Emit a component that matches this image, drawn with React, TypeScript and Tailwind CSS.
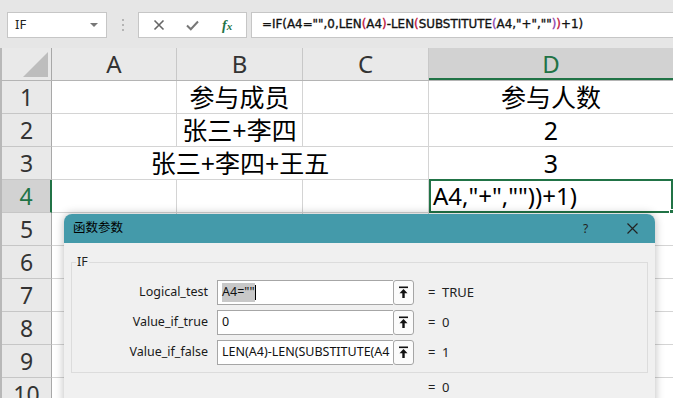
import React from 'react';

const FONT = { fontFamily: '"Noto Sans", "Noto Sans CJK SC", sans-serif' };

const COLS = [
  { name: 'A', w: 'w-[125px]' },
  { name: 'B', w: 'w-[126px]' },
  { name: 'C', w: 'w-[126px]' },
];

const UpArrow: React.FC = () => (
  <svg width="11" height="13" viewBox="0 0 11 13">
    <rect x="1" y="0.5" width="9" height="1.6" fill="#111" />
    <path d="M5.5 3 L1.5 7.2 H4.3 V12 H6.7 V7.2 H9.5 Z" fill="#111" />
  </svg>
);

const Field: React.FC<{ label: string; value: React.ReactNode; result: string }> = ({ label, value, result }) => (
  <div className="flex items-center h-[25px]">
    <div className="w-[144px] text-right text-[12.5px] text-[#1a1a1a] pr-[8px]">{label}</div>
    <div className="flex h-[25px] w-[197px] ml-[1px]">
      <div className="flex-1 bg-white border border-[#a6a6a6] border-r-0 flex items-center pl-[4px] text-[12.5px] text-[#111] overflow-hidden whitespace-nowrap">
        {value}
      </div>
      <div className="w-[21px] h-[25px] bg-[#fbfbfb] border border-[#a6a6a6] rounded-[3px] flex items-start justify-center pt-[5px]">
        <UpArrow />
      </div>
    </div>
    <div className="ml-[14px] text-[13px] text-[#222] w-[14px]">=</div>
    <div className="text-[13px] text-[#222]">{result}</div>
  </div>
);

const App: React.FC = () => {
  const rows = [1, 2, 3, 4, 5, 6, 7, 8, 9, 10];
  const cellText: Record<number, { b?: string; d?: string }> = {
    1: { b: '参与成员', d: '参与人数' },
    2: { b: '张三+李四', d: '2' },
    3: { b: '张三+李四+王五', d: '3' },
  };

  return (
    <div className="w-[673px] h-[398px] relative overflow-hidden bg-white" style={FONT}>
      {/* toolbar */}
      <div className="h-[48px] bg-[#e6e6e6] flex items-start pt-[12px]">
        <div className="ml-[7px] w-[100px] h-[26px] bg-white border border-[#c6c6c6] flex items-center pl-[7px] pr-[8px] text-[13px] text-[#222]">
          <span className="flex-1">IF</span>
          <svg width="8" height="5" viewBox="0 0 8 5"><path d="M0 0 H8 L4 4 Z" fill="#777" /></svg>
        </div>
        <div className="w-[31px] h-[26px] flex flex-col items-center justify-center gap-[3px]">
          <div className="w-[2px] h-[2px] bg-[#b4b4b4]" />
          <div className="w-[2px] h-[2px] bg-[#b4b4b4]" />
          <div className="w-[2px] h-[2px] bg-[#b4b4b4]" />
        </div>
        <div className="w-[109px] h-[26px] bg-white border border-[#c6c6c6] flex items-center">
          <svg className="ml-[14px]" width="12" height="12" viewBox="0 0 12 12">
            <path d="M1.5 1.5 L10.5 10.5 M10.5 1.5 L1.5 10.5" stroke="#666" strokeWidth="1.6" />
          </svg>
          <svg className="ml-[21px]" width="13" height="11" viewBox="0 0 13 11">
            <path d="M1 5.5 L4.8 9.3 L12 1.5" stroke="#777" strokeWidth="2" fill="none" />
          </svg>
          <span className="ml-[23px] text-[14px] italic text-[#217346] font-semibold" style={{ fontFamily: '"Liberation Serif", serif' }}>
            f<span className="text-[11px]">x</span>
          </span>
        </div>
        <div
          className="ml-[4px] flex-1 h-[26px] bg-white border border-[#c6c6c6] border-r-0 flex items-center pl-[10px] text-[11.9px] text-[#111] whitespace-nowrap [-webkit-text-stroke:0.35px_#111]"
          style={{ fontFamily: '"DejaVu Sans", sans-serif' }}
        >
          =IF(A4="",0,LEN<span className="text-[#c0143c] [-webkit-text-stroke:0.35px_#c0143c]">(</span>A4
          <span className="text-[#c0143c] [-webkit-text-stroke:0.35px_#c0143c]">)</span>-LEN
          <span className="text-[#c0143c] [-webkit-text-stroke:0.35px_#c0143c]">(</span>SUBSTITUTE
          <span className="text-[#8e44ad] [-webkit-text-stroke:0.35px_#8e44ad]">(</span>A4,"+",""
          <span className="text-[#8e44ad] [-webkit-text-stroke:0.35px_#8e44ad]">)</span>
          <span className="text-[#c0143c] [-webkit-text-stroke:0.35px_#c0143c]">)</span>+1)
        </div>
      </div>

      {/* column header */}
      <div className="flex h-[33px] border-b border-[#b4b4b4] bg-[#e9e9e9] border-l-2 border-l-[#b8b8b8]">
        <div className="w-[50px] border-r border-[#a8a8a8] flex items-end justify-end pr-[3px] pb-[3px]">
          <svg width="25" height="25" viewBox="0 0 25 25"><path d="M25 0 V25 H0 Z" fill="#bdbdbd" /></svg>
        </div>
        {COLS.map(c => (
          <div key={c.name} className={`${c.w} border-r border-[#c8c8c8] flex items-center justify-center text-[24px] text-[#333] leading-none`}>
            {c.name}
          </div>
        ))}
        <div className="flex-1 bg-[#d2d2d2] border-b-2 border-[#217346] flex items-center justify-center text-[24px] text-[#217346] leading-none pt-[2px]">
          D
        </div>
      </div>

      {/* rows */}
      {rows.map(r => {
        const sel = r === 4;
        const t = cellText[r] || {};
        return (
          <div key={r} className="flex h-[33px] border-l-2 border-l-[#b8b8b8]">
            <div
              className={`w-[50px] border-b border-[#c6c6c6] flex items-center justify-center text-[23px] leading-none ${
                sel ? 'bg-[#d2d2d2] text-[#217346] border-r-2 border-r-[#217346]' : 'bg-[#e9e9e9] text-[#333] border-r border-r-[#a8a8a8]'
              }`}
            >
              {r}
            </div>
            <div className={`w-[125px] border-b border-[#d4d4d4] ${r === 3 ? '' : 'border-r'} border-r-[#d4d4d4]`} />
            <div className={`w-[126px] border-b border-[#d4d4d4] ${r === 3 ? '' : 'border-r'} border-r-[#d4d4d4] flex items-center justify-center`}>
              {t.b && <span className="whitespace-nowrap text-[25px] text-black leading-none">{t.b}</span>}
            </div>
            <div className="w-[126px] border-b border-r border-[#d4d4d4]" />
            {sel ? (
              <div className="flex-1 border-2 border-[#217346] -mt-[1px] h-[34px] flex items-center pl-[2px] text-[24px] text-black leading-none whitespace-nowrap relative">
                A4,"+",""))+1)
                <div className="absolute -right-[3px] -bottom-[3px] w-[5px] h-[5px] bg-[#217346] border border-white" />
              </div>
            ) : (
              <div className="flex-1 border-b border-[#d4d4d4] flex items-center justify-center">
                {t.d && <span className="text-[25px] text-black leading-none">{t.d}</span>}
              </div>
            )}
          </div>
        );
      })}

      {/* dialog */}
      <div className="absolute left-[64px] top-[214px] w-[591px] h-[220px] bg-[#f0f0f0] rounded-t-[8px] shadow-[0_0_10px_rgba(0,0,0,0.28)] overflow-hidden">
        <div className="h-[29px] bg-[#449aaa] flex items-center pl-[9px] text-[12.5px] text-black">
          <span className="flex-1">函数参数</span>
          <span className="w-[20px] text-[12px] text-[#222]">?</span>
          <svg className="ml-[24px] mr-[17px]" width="11" height="11" viewBox="0 0 11 11">
            <path d="M0.5 0.5 L10.5 10.5 M10.5 0.5 L0.5 10.5" stroke="#222" strokeWidth="1.2" />
          </svg>
        </div>
        <div className="pt-[19px] px-[7px]">
          <div className="relative border border-[#dcdcdc] h-[111px] w-[577px] pt-[17px] flex flex-col gap-[5px]">
            <span className="absolute left-[4px] -top-[9px] bg-[#f0f0f0] px-[1px] text-[12.5px] text-[#222] leading-[16px]">IF</span>
            <Field
              label="Logical_test"
              value={
                <>
                  <span className="bg-[#c8c8c8]">A4=""</span>
                  <span className="inline-block w-[1px] h-[15px] bg-black" />
                </>
              }
              result="TRUE"
            />
            <Field label="Value_if_true" value="0" result="0" />
            <Field label="Value_if_false" value="LEN(A4)-LEN(SUBSTITUTE(A4" result="1" />
          </div>
          <div className="flex items-center h-[30px] text-[13px] text-[#222]">
            <div className="w-[357px]" />
            <span className="w-[14px]">=</span>
            <span>0</span>
          </div>
        </div>
      </div>
    </div>
  );
};

export default App;
